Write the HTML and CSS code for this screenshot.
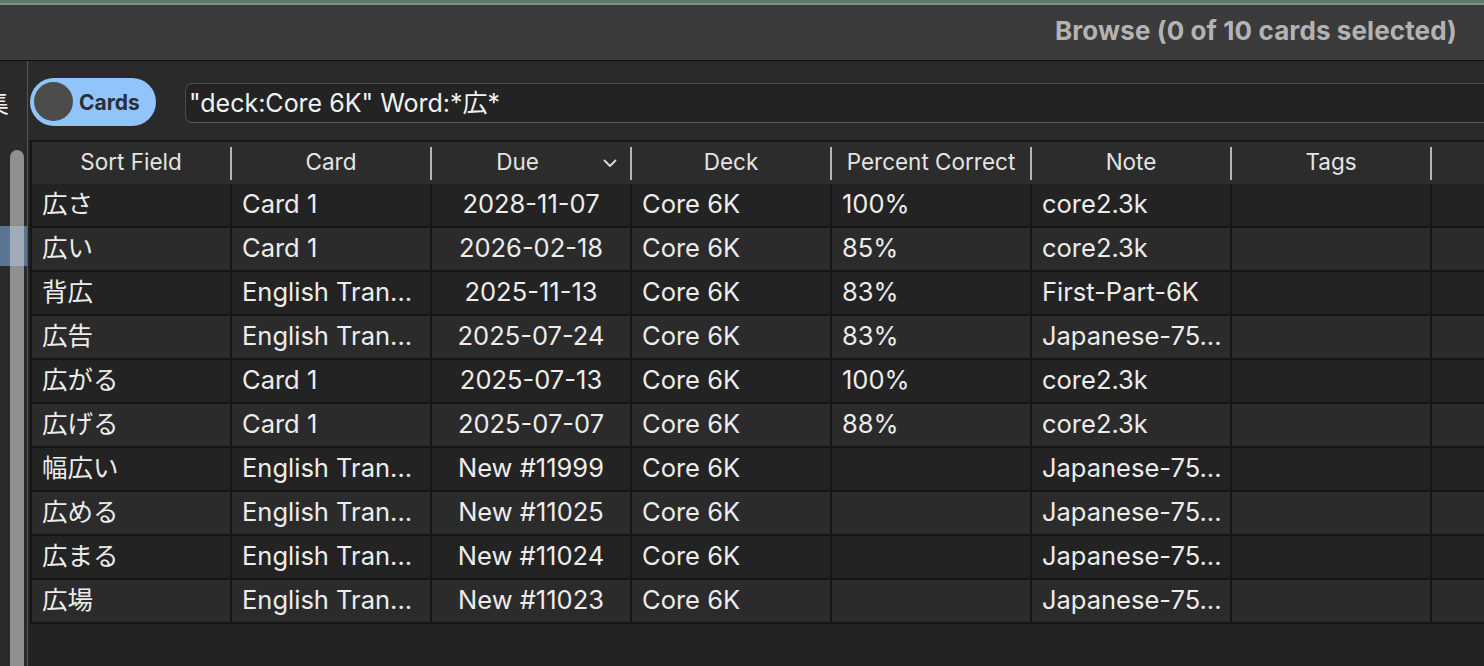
FILE: index.html
```html
<!DOCTYPE html>
<html lang="ja">
<head>
<meta charset="utf-8">
<title>Browse</title>
<link rel="stylesheet" href="styles.css">
</head>
<body>
<div class="window">
  <div class="topstrip"></div>
  <div class="titlebar"><span class="title">Browse (0 of 10 cards selected)</span></div>
  <div class="main">
    <aside class="sidebar">
      <div class="side-glyph"><span>編集</span></div>
      <div class="side-spacer"></div>
      <div class="side-row selected"></div>
      <div class="scrollbar"></div>
    </aside>
    <section class="content">
      <div class="toolbar">
        <div class="toggle"><span class="knob"></span><span class="toggle-label">Cards</span></div>
        <div class="search">"deck:Core 6K" Word:*広*</div>
      </div>
      <div class="table">
        <div class="thead">
          <div class="th"><span class="lbl">Sort Field</span><span class="sep"></span></div>
          <div class="th"><span class="lbl">Card</span><span class="sep"></span></div>
          <div class="th"><span class="lbl">Due</span><svg class="chev" width="14" height="9" viewBox="0 0 14 9"><polyline points="1.5,1.5 7,7 12.5,1.5" fill="none" stroke="#dcdcdc" stroke-width="1.8" stroke-linecap="round" stroke-linejoin="round"/></svg><span class="sep"></span></div>
          <div class="th"><span class="lbl">Deck</span><span class="sep"></span></div>
          <div class="th"><span class="lbl">Percent Correct</span><span class="sep"></span></div>
          <div class="th"><span class="lbl">Note</span><span class="sep"></span></div>
          <div class="th"><span class="lbl">Tags</span><span class="sep"></span></div>
          <div class="th last"></div>
        </div>
        <div class="tr odd"><div class="td">広さ</div><div class="td">Card 1</div><div class="td c">2028-11-07</div><div class="td">Core 6K</div><div class="td">100%</div><div class="td">core2.3k</div><div class="td"></div><div class="td last"></div></div>
        <div class="tr even"><div class="td">広い</div><div class="td">Card 1</div><div class="td c">2026-02-18</div><div class="td">Core 6K</div><div class="td">85%</div><div class="td">core2.3k</div><div class="td"></div><div class="td last"></div></div>
        <div class="tr odd"><div class="td">背広</div><div class="td">English Tran...</div><div class="td c">2025-11-13</div><div class="td">Core 6K</div><div class="td">83%</div><div class="td">First-Part-6K</div><div class="td"></div><div class="td last"></div></div>
        <div class="tr even"><div class="td">広告</div><div class="td">English Tran...</div><div class="td c">2025-07-24</div><div class="td">Core 6K</div><div class="td">83%</div><div class="td">Japanese-75...</div><div class="td"></div><div class="td last"></div></div>
        <div class="tr odd"><div class="td">広がる</div><div class="td">Card 1</div><div class="td c">2025-07-13</div><div class="td">Core 6K</div><div class="td">100%</div><div class="td">core2.3k</div><div class="td"></div><div class="td last"></div></div>
        <div class="tr even"><div class="td">広げる</div><div class="td">Card 1</div><div class="td c">2025-07-07</div><div class="td">Core 6K</div><div class="td">88%</div><div class="td">core2.3k</div><div class="td"></div><div class="td last"></div></div>
        <div class="tr odd"><div class="td">幅広い</div><div class="td">English Tran...</div><div class="td c">New #11999</div><div class="td">Core 6K</div><div class="td"></div><div class="td">Japanese-75...</div><div class="td"></div><div class="td last"></div></div>
        <div class="tr even"><div class="td">広める</div><div class="td">English Tran...</div><div class="td c">New #11025</div><div class="td">Core 6K</div><div class="td"></div><div class="td">Japanese-75...</div><div class="td"></div><div class="td last"></div></div>
        <div class="tr odd"><div class="td">広まる</div><div class="td">English Tran...</div><div class="td c">New #11024</div><div class="td">Core 6K</div><div class="td"></div><div class="td">Japanese-75...</div><div class="td"></div><div class="td last"></div></div>
        <div class="tr even"><div class="td">広場</div><div class="td">English Tran...</div><div class="td c">New #11023</div><div class="td">Core 6K</div><div class="td"></div><div class="td">Japanese-75...</div><div class="td"></div><div class="td last"></div></div>
      </div>
    </section>
  </div>
</div>
</body>
</html>
```
FILE: styles.css
```css
* { box-sizing: border-box; }
html, body {
  margin: 0;
  padding: 0;
  background: #232323;
  overflow: hidden;
}
body {
  font-family: "Inter", "Noto Sans CJK JP", sans-serif;
  color: #e6e6e6;
}
.window {
  width: 1484px;
  height: 666px;
  display: flex;
  flex-direction: column;
}
.topstrip {
  height: 5px;
  background: #5a7d69;
  border-bottom: 2px solid #8a8a8a;
}
.titlebar {
  height: 56px;
  background: #3b3b3b;
  border-bottom: 1px solid #101010;
  display: flex;
  align-items: center;
  justify-content: flex-end;
  padding-right: 27px;
  padding-bottom: 5px;
}
.title {
  font-size: 26px;
  font-weight: 700;
  color: #b3b3b3;
  letter-spacing: 0.1px;
}
.main {
  flex: 1;
  display: flex;
  min-height: 0;
}
.sidebar {
  width: 28px;
  background: #2a2a2a;
  border-right: 1px solid #575757;
  position: relative;
  overflow: hidden;
  display: flex;
  flex-direction: column;
}
.side-glyph {
  height: 80px;
  padding-top: 28px;
  overflow: hidden;
  white-space: nowrap;
}
.side-glyph span {
  display: block;
  margin-left: -43px;
  font-size: 26px;
  line-height: 30px;
  color: #f0f0f0;
}
.side-spacer { height: 85px; }
.side-row.selected {
  height: 40px;
  background: #5b7593;
}
.scrollbar {
  position: absolute;
  left: 10px;
  top: 89px;
  width: 14px;
  height: 600px;
  border-radius: 7px;
  background: rgba(205, 205, 205, 0.62);
}
.content {
  flex: 1;
  display: flex;
  flex-direction: column;
  min-width: 0;
  background: #232323;
}
.toolbar {
  height: 79px;
  background: #2a2a2a;
  display: flex;
  align-items: center;
  padding-left: 2px;
  gap: 29px;
  flex-shrink: 0;
}
.toggle {
  width: 126px;
  height: 48px;
  border-radius: 24px;
  background: #90c4fb;
  display: flex;
  align-items: center;
  padding-left: 4px;
  gap: 6px;
  margin-top: 2px;
}
.knob {
  width: 39px;
  height: 39px;
  border-radius: 50%;
  background: #4c4c4c;
}
.toggle-label {
  font-size: 21px;
  font-weight: 700;
  color: #2a2e35;
  margin-top: 2px;
}
.search {
  flex: 1;
  height: 40px;
  margin-top: 5px;
  margin-right: -10px;
  border: 1px solid #4c4c4c;
  border-bottom-color: #5c5c5c;
  border-radius: 7px;
  background: #232323;
  color: #f2f2f2;
  font-size: 25px;
  line-height: 38px;
  padding-left: 3px;
  white-space: nowrap;
}
.table {
  margin-left: 2px;
  border-left: 2px solid #151515;
  border-top: 2px solid #151515;
}
.thead {
  display: grid;
  grid-template-columns: repeat(7, 200px) 1fr;
  height: 42px;
  background: #2c2c2c;
}
.th {
  display: flex;
  align-items: center;
  font-size: 22.5px;
  color: #e4e4e4;
}
.th .lbl {
  flex: 1;
  text-align: center;
  margin-top: -3px;
}
.th .chev {
  margin-right: 13px;
  margin-top: 1px;
}
.th .sep {
  width: 2px;
  height: 33px;
  margin-top: 1px;
  background: #b4b4b4;
}
.tr {
  display: grid;
  grid-template-columns: repeat(7, 200px) 1fr;
}
.tr.odd { background: #232323; }
.tr.even { background: #2b2b2b; }
.td {
  height: 44px;
  border-right: 2px solid #151515;
  border-bottom: 2px solid #151515;
  padding-left: 10px;
  font-size: 25.5px;
  line-height: 40px;
  white-space: nowrap;
  overflow: hidden;
  color: #ececec;
}
.td.c {
  text-align: center;
  padding-left: 0;
}
.td.last { border-right: none; }
```
